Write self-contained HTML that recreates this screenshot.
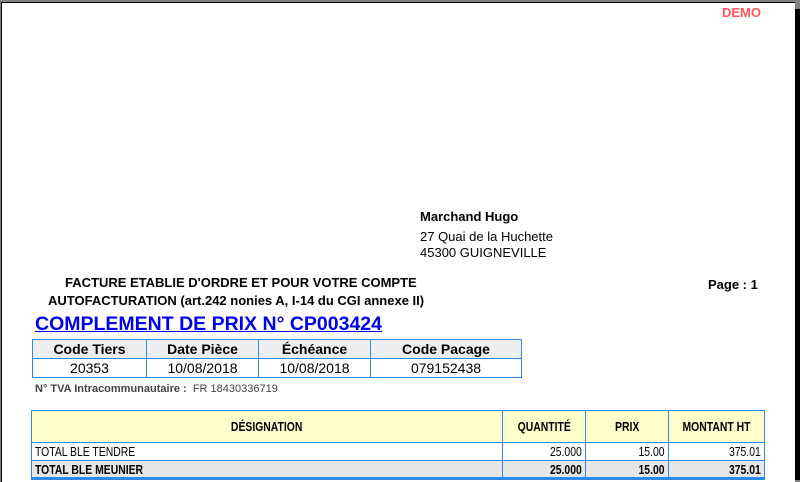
<!DOCTYPE html>
<html><head><meta charset="utf-8"><style>
*{margin:0;padding:0;box-sizing:border-box}
body{width:800px;height:480px;overflow:hidden;background:#808080;font-family:"Liberation Sans",Arial,sans-serif;position:relative}
#pg{position:absolute;left:1px;top:2px;width:794px;height:480px;background:#fff;border-left:1px solid #000;border-top:1px solid #000}
#sh{position:absolute;left:795px;top:9px;width:5px;height:471px;background:#000}
.a{position:absolute;white-space:nowrap;color:#000}
table{border-collapse:collapse;position:absolute}
td{border:1px solid #2a8aef;text-align:center}
.t1 td{font-size:14px;height:19px}
.t2 td{font-size:13px}
.n{display:inline-block;transform:scaleX(.8)}
.l{transform-origin:left}
.r{transform-origin:right}
</style></head><body>
<div id="pg"></div><div id="sh"></div>
<div class="a" style="left:722px;top:5px;color:#f55;font-size:13px;font-weight:bold">DEMO</div>
<div class="a" style="left:420px;top:209px;font-size:13px;font-weight:bold">Marchand Hugo</div>
<div class="a" style="left:420px;top:229px;font-size:13px">27 Quai de la Huchette</div>
<div class="a" style="left:420px;top:245px;font-size:13px">45300 GUIGNEVILLE</div>
<div class="a" style="left:65px;top:275px;font-size:13px;font-weight:bold">FACTURE ETABLIE D'ORDRE ET POUR VOTRE COMPTE</div>
<div class="a" style="left:48px;top:293px;font-size:13px;font-weight:bold">AUTOFACTURATION (art.242 nonies A, I-14 du CGI annexe II)</div>
<div class="a" style="left:708px;top:277px;font-size:13px;font-weight:bold">Page : 1</div>
<div class="a" style="left:35px;top:313px;font-size:19.5px;font-weight:bold;color:#00e;text-decoration:underline">COMPLEMENT DE PRIX N° CP003424</div>
<table class="t1" style="left:32px;top:339px;width:490px">
<tr style="background:#eee"><td style="width:114px;font-weight:bold">Code Tiers</td><td style="width:112px;font-weight:bold">Date Pièce</td><td style="width:112px;font-weight:bold">Échéance</td><td style="font-weight:bold">Code Pacage</td></tr>
<tr><td>20353</td><td>10/08/2018</td><td>10/08/2018</td><td>079152438</td></tr>
</table>
<div class="a" style="left:35px;top:383px;font-size:11px;color:#444"><b>N° TVA Intracommunautaire :</b>&nbsp; FR 18430336719</div>
<table class="t2" style="left:31px;top:410px;width:734px">
<tr style="background:#ffc;font-weight:bold;height:32px"><td style="width:471px"><span class="n">DÉSIGNATION</span></td><td style="width:83px"><span class="n">QUANTITÉ</span></td><td style="width:83px"><span class="n">PRIX</span></td><td><span class="n">MONTANT HT</span></td></tr>
<tr style="height:18px"><td style="text-align:left;padding-left:3px"><span class="n l">TOTAL BLE TENDRE</span></td><td style="text-align:right;padding-right:3px"><span class="n r">25.000</span></td><td style="text-align:right;padding-right:3px"><span class="n r">15.00</span></td><td style="text-align:right;padding-right:3px"><span class="n r">375.01</span></td></tr>
<tr style="height:18px;background:#e6e6e6;font-weight:bold;border-bottom:3px solid #2a8aef"><td style="text-align:left;padding-left:3px"><span class="n l">TOTAL BLE MEUNIER</span></td><td style="text-align:right;padding-right:3px"><span class="n r">25.000</span></td><td style="text-align:right;padding-right:3px"><span class="n r">15.00</span></td><td style="text-align:right;padding-right:3px"><span class="n r">375.01</span></td></tr>
</table>
</body></html>
